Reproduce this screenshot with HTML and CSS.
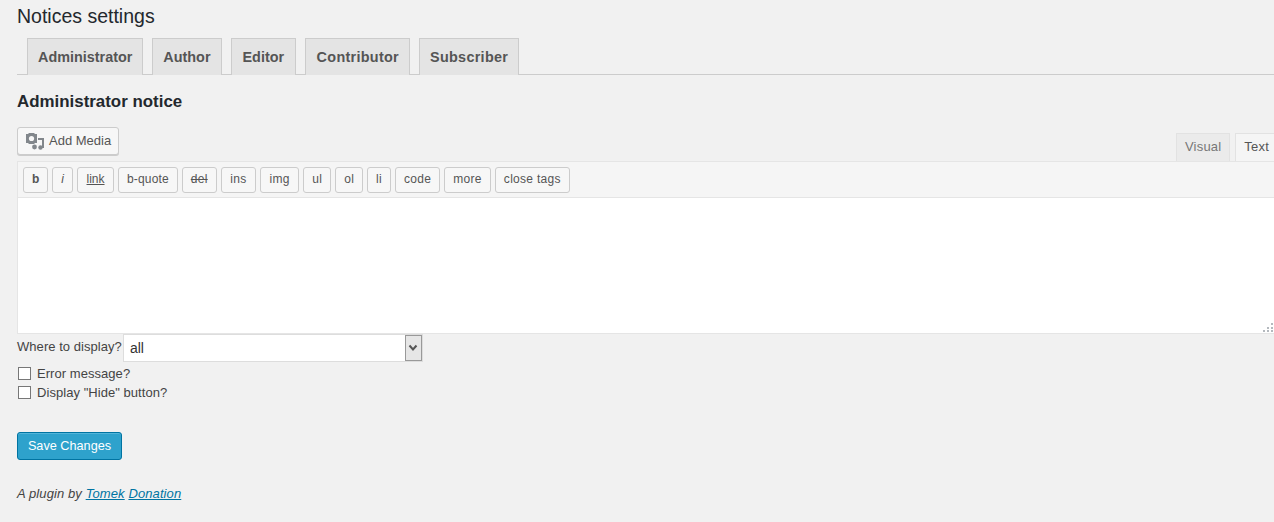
FILE: index.html
```html
<!DOCTYPE html>
<html lang="en">
<head>
    <meta charset="UTF-8">
    <title>Notices settings</title>
    <link rel="stylesheet" href="styles.css">
</head>
<body>
    <h2 class="page-title">Notices settings</h2>

    <div class="tabs">
        <a class="tab">Administrator</a>
        <a class="tab">Author</a>
        <a class="tab tab-wide">Editor</a>
        <a class="tab tab-loose">Contributor</a>
        <a class="tab tab-loose">Subscriber</a>
    </div>

    <h3 class="notice-title">Administrator notice</h3>

    <div class="editor-top">
        <button class="media-btn">
            <svg class="media-icon" width="18" height="18" viewBox="0 0 18 18">
                <path fill="#82878c" d="M0 2h2l1-1h5l1 1h2v9H9l-1 1H3l-1-1H0z"/>
                <circle cx="5.5" cy="6.5" r="2.6" fill="#f7f7f7"/>
                <path fill="#82878c" d="M12 6h6v10h-2V8h-4z"/>
                <circle cx="8.5" cy="15" r="2.4" fill="#82878c"/>
                <circle cx="14.5" cy="15.5" r="2.2" fill="#82878c"/>
            </svg>
            <span class="btn-label">Add Media</span>
        </button>
        <div class="mode-tabs">
            <a class="mode-tab">Visual</a>
            <a class="mode-tab active">Text</a>
        </div>
    </div>

    <div class="editor">
        <div class="toolbar">
            <button class="tool tight bold">b</button>
            <button class="tool tight italic">i</button>
            <button class="tool tight wide under">link</button>
            <button class="tool quote">b-quote</button>
            <button class="tool strike">del</button>
            <button class="tool wide">ins</button>
            <button class="tool wide">img</button>
            <button class="tool">ul</button>
            <button class="tool">ol</button>
            <button class="tool">li</button>
            <button class="tool">code</button>
            <button class="tool">more</button>
            <button class="tool">close tags</button>
        </div>
        <div class="editor-area">
            <svg class="resize-grip" width="11" height="11" viewBox="0 0 11 11">
                <path fill="#b4b9be" d="M8 1h2v2H8zM4 5h2v2H4zM8 5h2v2H8zM0 8h2v2H0zM4 8h2v2H4zM8 8h2v2H8z"/>
            </svg>
        </div>
    </div>

    <div class="where-row">
        <label class="where-label">Where to display?</label>
        <div class="select-box">
            <span class="select-value">all</span>
            <span class="select-arrow">
                <svg width="10" height="8" viewBox="0 0 10 8">
                    <path fill="none" stroke="#555" stroke-width="2" d="M1.5 1.5L5 5.5l3.5-4"/>
                </svg>
            </span>
        </div>
    </div>

    <label class="check-row"><span class="check"></span>Error message?</label>
    <label class="check-row"><span class="check"></span>Display "Hide" button?</label>

    <button class="save-btn">Save Changes</button>

    <p class="credit">A plugin by <a href="#">Tomek</a> <a href="#">Donation</a></p>
</body>
</html>
```

FILE: styles.css
```css
html {
    background: #f1f1f1;
}

body {
    margin: 0;
    padding: 0 0 0 17px;
    height: 522px;
    overflow: hidden;
    box-sizing: border-box;
    font-family: "Liberation Sans", Arial, sans-serif;
    font-size: 13px;
    color: #444;
}

.page-title {
    margin: 0;
    padding-top: 5px;
    height: 38px;
    box-sizing: border-box;
    font-size: 19.5px;
    line-height: 23px;
    font-weight: 400;
    color: #23282d;
}

.tabs {
    display: flex;
    gap: 9px;
    height: 37px;
    padding-left: 10px;
    border-bottom: 1px solid #ccc;
    box-sizing: border-box;
}

.tab {
    height: 37px;
    padding: 0 10px;
    box-sizing: border-box;
    background: #e4e4e4;
    border: 1px solid #ccc;
    border-bottom: none;
    font-size: 14.4px;
    font-weight: 700;
    line-height: 36px;
    color: #555;
}

.tab-wide {
    padding: 0 11px;
}

.tab-loose {
    padding: 0 9.5px 0 10.5px;
    letter-spacing: 0.3px;
}

.notice-title {
    margin: 0;
    padding-top: 17px;
    height: 52px;
    box-sizing: border-box;
    font-size: 16.9px;
    line-height: 20px;
    font-weight: 700;
    color: #23282d;
}

.editor-top {
    display: flex;
    justify-content: space-between;
    align-items: flex-end;
    height: 34px;
}

.media-btn {
    display: flex;
    align-items: center;
    gap: 5px;
    height: 28px;
    width: 102px;
    margin-bottom: 6px;
    padding: 0 0 0 8px;
    background: #f7f7f7;
    border: 1px solid #ccc;
    border-radius: 3px;
    box-shadow: 0 1px 0 #ccc;
    font-family: inherit;
    font-size: 13px;
    color: #555;
}

.btn-label {
    padding-bottom: 2px;
}

.mode-tabs {
    display: flex;
    gap: 5px;
}

.mode-tab {
    height: 28px;
    padding: 0 8px;
    box-sizing: border-box;
    background: #ebebeb;
    border: 1px solid #e2e2e2;
    border-bottom: none;
    line-height: 25px;
    letter-spacing: 0.2px;
    color: #777;
}

.mode-tab.active {
    background: #f5f5f5;
    color: #555;
    padding: 0 5px 0 8px;
    border-right: none;
}

.editor {
    border: 1px solid #e5e5e5;
    border-right: none;
}

.toolbar {
    display: flex;
    gap: 4px;
    height: 36px;
    padding: 5px 0 0 5px;
    box-sizing: border-box;
    background: #f5f5f5;
    border-bottom: 1px solid #e5e5e5;
}

.tool {
    height: 26px;
    padding: 0 8px 2px;
    background: #f7f7f7;
    border: 1px solid #ccc;
    border-radius: 3px;
    font-family: inherit;
    font-size: 12px;
    letter-spacing: 0.3px;
    color: #555;
}

.tight {
    letter-spacing: 0;
}

.wide {
    padding: 0 8.5px 2px;
}

.quote {
    letter-spacing: 0.15px;
}

.bold {
    font-weight: 700;
}

.italic {
    font-style: italic;
}

.under {
    text-decoration: underline;
}

.strike {
    text-decoration: line-through;
}

.editor-area {
    position: relative;
    height: 135px;
    background: #fff;
}

.resize-grip {
    position: absolute;
    right: 0;
    bottom: 0;
}

.where-row {
    display: flex;
    height: 30px;
}

.where-label {
    padding-top: 5px;
    line-height: 16px;
    margin-right: 1px;
    letter-spacing: 0.05px;
}

.select-box {
    display: flex;
    justify-content: space-between;
    width: 300px;
    height: 28px;
    box-sizing: border-box;
    background: #fff;
    border: 1px solid #ddd;
}

.select-value {
    padding-left: 6px;
    font-size: 14px;
    line-height: 27px;
    color: #333;
}

.select-arrow {
    display: flex;
    align-items: center;
    justify-content: center;
    width: 15px;
    background: #e6e6e6;
    border: 1px solid #999;
}

.check-row {
    display: flex;
    align-items: center;
    height: 19px;
    margin-left: 1px;
    letter-spacing: 0.05px;
}

.check {
    width: 13px;
    height: 13px;
    box-sizing: border-box;
    margin-right: 6px;
    background: #fff;
    border: 1px solid #777;
}

.save-btn {
    display: block;
    width: 105px;
    height: 28px;
    margin-top: 30px;
    padding: 0;
    background: #2ea2cc;
    border: 1px solid #0074a2;
    border-radius: 3px;
    box-shadow: inset 0 1px 0 rgba(120, 200, 230, 0.5);
    font-family: inherit;
    font-size: 12.7px;
    color: #fff;
}

.credit {
    margin: 26px 0 0;
    font-style: italic;
    line-height: 16px;
    letter-spacing: 0.1px;
}

.credit a {
    color: #0074a2;
}
```
